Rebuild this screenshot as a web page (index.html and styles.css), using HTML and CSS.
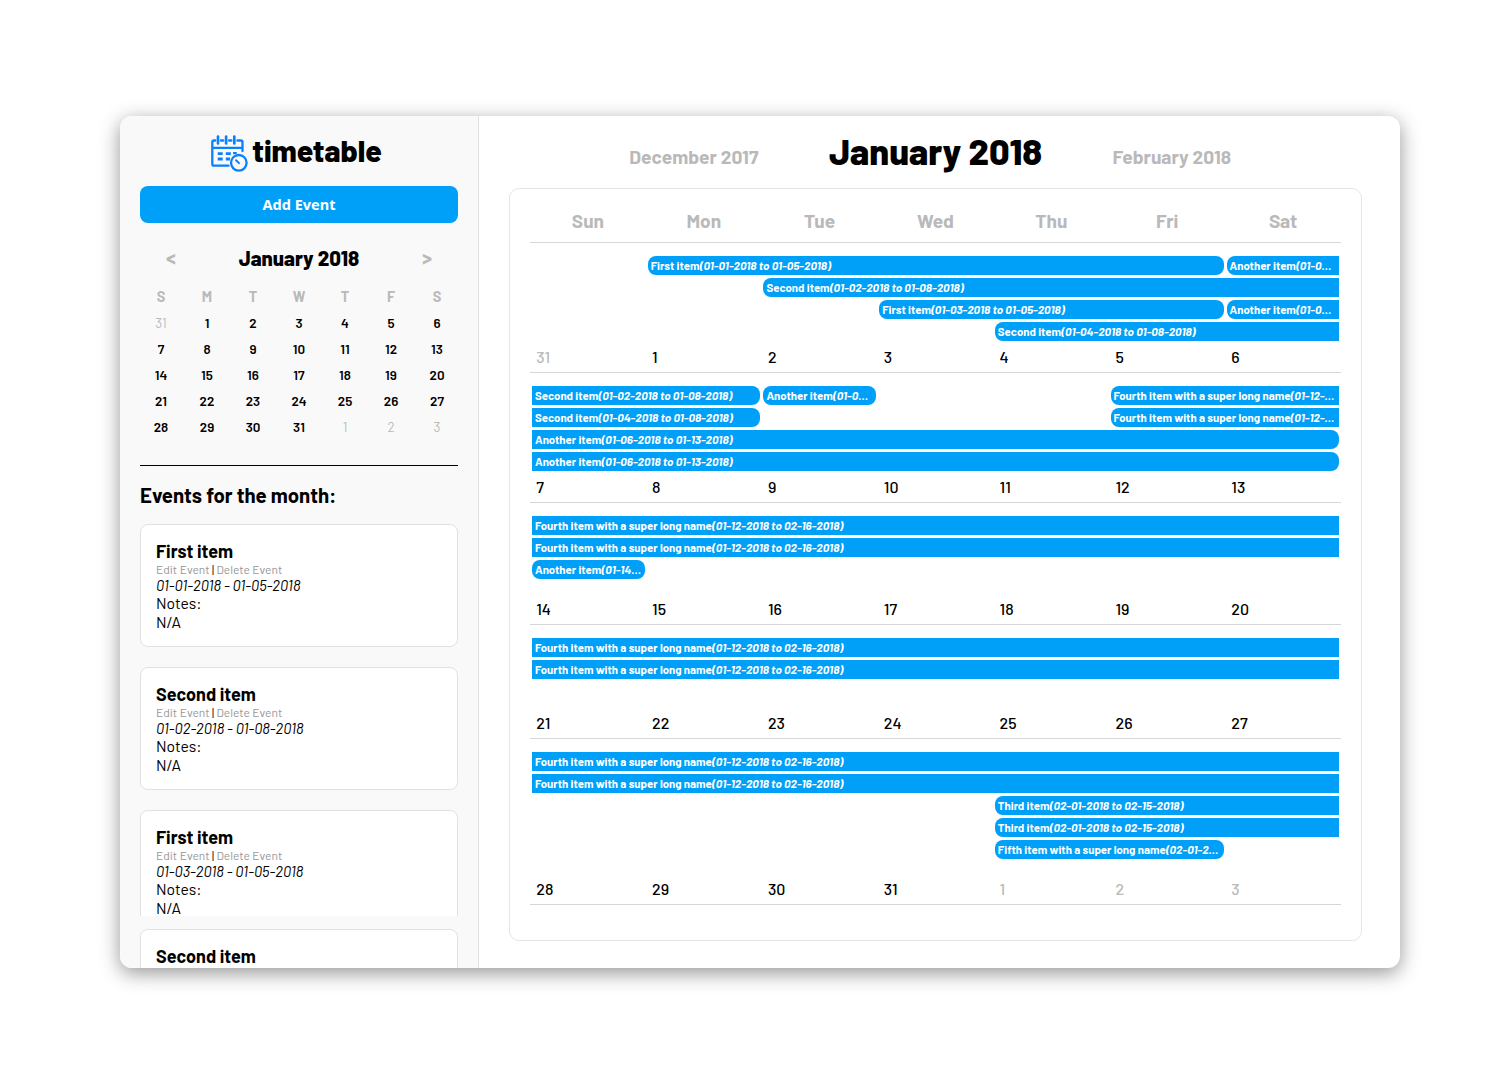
FILE: index.html
```html
<!DOCTYPE html>
<html lang="en">
<head>
<meta charset="utf-8">
<title>timetable</title>
<link rel="stylesheet" href="styles.css">
</head>
<body>
<div class="app">
  <aside class="sidebar">
    <div class="logo">
      <svg class="logo-icon" viewBox="0 0 37 37" fill="none" stroke="#0a80ff" stroke-width="2.3" stroke-linecap="round">
        <path d="M4.2 5.5H3Q1.3 5.5 1.3 7.2V29Q1.3 30.7 3 30.7H17.5M10 5.5h2.2M18 5.5h2.4M26.4 5.5h3.4Q31.5 5.5 31.5 7.2V16M1.4 12.8H31.4"/>
        <path d="M7 1.5v7M15.1 1.5v7M23.3 1.5v7" stroke-width="2.7"/>
        <path d="M6.7 18.6h5M14.8 18.6h5M6.7 24h5M14.8 24h4.2" stroke-width="2.8" stroke-linecap="butt"/>
        <path d="M22 18.2h3.8" stroke-width="2.2" stroke-linecap="butt"/>
        <circle cx="27.8" cy="27.8" r="7.8"/>
        <path d="M25 25.2l3 2.9" stroke-width="2"/>
      </svg>
      <span class="logo-text">timetable</span>
    </div>
    <button class="add-event">Add Event</button>

    <div class="mini-nav">
      <span class="arrow">&lt;</span>
      <span class="mini-title">January 2018</span>
      <span class="arrow">&gt;</span>
    </div>
    <div class="mini-grid">
      <b>S</b><b>M</b><b>T</b><b>W</b><b>T</b><b>F</b><b>S</b>
      <span class="other">31</span><span>1</span><span>2</span><span>3</span><span>4</span><span>5</span><span>6</span>
      <span>7</span><span>8</span><span>9</span><span>10</span><span>11</span><span>12</span><span>13</span>
      <span>14</span><span>15</span><span>16</span><span>17</span><span>18</span><span>19</span><span>20</span>
      <span>21</span><span>22</span><span>23</span><span>24</span><span>25</span><span>26</span><span>27</span>
      <span>28</span><span>29</span><span>30</span><span>31</span><span class="other">1</span><span class="other">2</span><span class="other">3</span>
    </div>

    <h2 class="events-title">Events for the month:</h2>
    <div class="event-list">
      <article class="event">
        <h3>First item</h3>
        <div class="links"><a>Edit Event</a> | <a>Delete Event</a></div>
        <div class="dates">01-01-2018 - 01-05-2018</div>
        <div>Notes:</div><div>N/A</div>
      </article>
      <article class="event">
        <h3>Second item</h3>
        <div class="links"><a>Edit Event</a> | <a>Delete Event</a></div>
        <div class="dates">01-02-2018 - 01-08-2018</div>
        <div>Notes:</div><div>N/A</div>
      </article>
      <article class="event">
        <h3>First item</h3>
        <div class="links"><a>Edit Event</a> | <a>Delete Event</a></div>
        <div class="dates">01-03-2018 - 01-05-2018</div>
        <div>Notes:</div><div>N/A</div>
      </article>
    </div>
    <div class="event-list next">
      <article class="event">
        <h3>Second item</h3>
      </article>
    </div>
  </aside>

  <main class="main">
    <header class="months">
      <span class="side prev">December 2017</span>
      <h1>January 2018</h1>
      <span class="side">February 2018</span>
    </header>
    <section class="calendar">
      <div class="weekdays"><span>Sun</span><span>Mon</span><span>Tue</span><span>Wed</span><span>Thu</span><span>Fri</span><span>Sat</span></div>

      <div class="week w1">
        <div class="bars">
          <div class="bar start end c2-7">First item<i>(01-01-2018 to 01-05-2018)</i></div>
          <div class="bar start c7-8">Another item<i>(01-06-2018 to 01-13-2018)</i></div>
          <div class="bar start c3-8">Second item<i>(01-02-2018 to 01-08-2018)</i></div>
          <div class="bar start end c4-7">First item<i>(01-03-2018 to 01-05-2018)</i></div>
          <div class="bar start c7-8">Another item<i>(01-06-2018 to 01-13-2018)</i></div>
          <div class="bar start c5-8">Second item<i>(01-04-2018 to 01-08-2018)</i></div>
        </div>
        <div class="days"><span class="other">31</span><span>1</span><span>2</span><span>3</span><span>4</span><span>5</span><span>6</span></div>
      </div>

      <div class="week w2">
        <div class="bars">
          <div class="bar end c1-3">Second item<i>(01-02-2018 to 01-08-2018)</i></div>
          <div class="bar start end c3-4">Another item<i>(01-09-2018 to 01-09-2018)</i></div>
          <div class="bar start c6-8">Fourth item with a super long name<i>(01-12-2018 to 02-16-2018)</i></div>
          <div class="bar end c1-3">Second item<i>(01-04-2018 to 01-08-2018)</i></div>
          <div class="bar start c6-8">Fourth item with a super long name<i>(01-12-2018 to 02-16-2018)</i></div>
          <div class="bar end c1-8">Another item<i>(01-06-2018 to 01-13-2018)</i></div>
          <div class="bar end c1-8">Another item<i>(01-06-2018 to 01-13-2018)</i></div>
        </div>
        <div class="days"><span>7</span><span>8</span><span>9</span><span>10</span><span>11</span><span>12</span><span>13</span></div>
      </div>

      <div class="week w3">
        <div class="bars">
          <div class="bar c1-8">Fourth item with a super long name<i>(01-12-2018 to 02-16-2018)</i></div>
          <div class="bar c1-8">Fourth item with a super long name<i>(01-12-2018 to 02-16-2018)</i></div>
          <div class="bar start end c1-2">Another item<i>(01-14-2018 to 01-14-2018)</i></div>
        </div>
        <div class="days"><span>14</span><span>15</span><span>16</span><span>17</span><span>18</span><span>19</span><span>20</span></div>
      </div>

      <div class="week w4">
        <div class="bars">
          <div class="bar c1-8">Fourth item with a super long name<i>(01-12-2018 to 02-16-2018)</i></div>
          <div class="bar c1-8">Fourth item with a super long name<i>(01-12-2018 to 02-16-2018)</i></div>
        </div>
        <div class="days"><span>21</span><span>22</span><span>23</span><span>24</span><span>25</span><span>26</span><span>27</span></div>
      </div>

      <div class="week w5">
        <div class="bars">
          <div class="bar c1-8">Fourth item with a super long name<i>(01-12-2018 to 02-16-2018)</i></div>
          <div class="bar c1-8">Fourth item with a super long name<i>(01-12-2018 to 02-16-2018)</i></div>
          <div class="bar start c5-8">Third item<i>(02-01-2018 to 02-15-2018)</i></div>
          <div class="bar start c5-8">Third item<i>(02-01-2018 to 02-15-2018)</i></div>
          <div class="bar start end c5-7">Fifth item with a super long name<i>(02-01-2018 to 02-02-2018)</i></div>
        </div>
        <div class="days"><span>28</span><span>29</span><span>30</span><span>31</span><span class="other">1</span><span class="other">2</span><span class="other">3</span></div>
      </div>
    </section>
  </main>
</div>
</body>
</html>
```
FILE: styles.css
```css
* { box-sizing: border-box; }
body {
  margin: 0;
  min-height: 100vh;
  padding: 116px 112px 0 120px;
  background: #fff;
  color: #000;
  font-family: Barlow, Roboto, sans-serif;
}
h1, h2, h3 { margin: 0; }

.app {
  display: flex;
  height: 852px;
  border-radius: 12px;
  overflow: hidden;
  background: #fff;
  box-shadow: 0 5px 20px rgba(0, 0, 0, .42);
}

/* Sidebar */
.sidebar {
  display: flex;
  flex-direction: column;
  width: 359px;
  flex: none;
  padding: 0 20px;
  border-right: 1px solid #e1e1e1;
  background: #f9f9f9;
}
.logo {
  display: flex;
  align-items: center;
  justify-content: center;
  flex: none;
  gap: 4px;
  height: 70px;
  padding: 5px 5px 0 0;
}
.logo-icon { width: 37px; height: 37px; }
.logo-text {
  margin-top: -8px;
  font-size: 30px;
  line-height: 36px;
  font-weight: 800;
}
.add-event {
  flex: none;
  height: 37px;
  border: 0;
  border-radius: 8px;
  padding: 0;
  background: #009ff8;
  color: #fff;
  font: 700 14.5px/37px "Noto Sans", sans-serif;
}
.mini-nav {
  display: flex;
  align-items: center;
  justify-content: space-between;
  flex: none;
  height: 36px;
  margin-top: 16px;
  padding: 0 26px;
}
.arrow { font-size: 20px; font-weight: 700; color: #b9b9b9; }
.mini-title { padding-top: 2px; font-size: 20.4px; font-weight: 800; }
.mini-grid {
  display: grid;
  grid-template-columns: repeat(7, 46px);
  grid-template-rows: repeat(6, 26px);
  flex: none;
  justify-content: center;
  width: 318px;
  height: 182px;
  margin: 9px 0 4px;
  text-align: center;
  font-size: 13.4px;
  line-height: 26px;
  font-weight: 600;
  border-bottom: 1px solid #000;
}
.mini-grid b { color: #b9b9b9; font-size: 14.4px; font-weight: 700; }
.other { color: #b9b9b9; }
.mini-grid .other { font-weight: 400; }
.events-title {
  flex: none;
  margin: 13px 0 17px;
  font-size: 20.4px;
  line-height: 24px;
}
.event-list {
  flex: none;
  display: flex;
  flex-direction: column;
  gap: 20px;
  height: 392px;
  overflow: hidden;
}
.event-list.next { height: 39px; margin-top: 13px; }
.event {
  flex: none;
  height: 123px;
  padding: 15px;
  border: 1px solid #e1e1e1;
  border-radius: 8px;
  background: #fff;
  font-size: 15.7px;
  line-height: 19px;
}
.event h3 { font-size: 18px; line-height: 23px; }
.links { font-size: 12px; line-height: 13px; }
.links a { color: #979797; }
.dates { margin-bottom: -1px; font-size: 14.9px; font-style: italic; line-height: 18px; }

/* Month view */
.main { flex: 1; padding: 0 38px 27px 30px; }
.months {
  display: grid;
  grid-template-columns: 1fr auto 1fr;
  align-items: start;
  gap: 70.5px;
  height: 72px;
  padding-top: 13px;
}
h1 { font-size: 36.1px; line-height: 44px; font-weight: 800; }
.side { margin-top: 17px; font-size: 19.2px; line-height: 22px; font-weight: 700; color: #b9b9b9; }
.prev { text-align: right; }
.calendar {
  height: 753px;
  padding: 12px 20px;
  border: 1px solid #e5e5e5;
  border-radius: 10px;
}
.weekdays {
  display: grid;
  grid-template-columns: repeat(7, 1fr);
  height: 42px;
  text-align: center;
  font-size: 19.1px;
  line-height: 40px;
  font-weight: 700;
  color: #b9b9b9;
  border-bottom: 1px solid #d6d6d6;
}
.week {
  display: flex;
  flex-direction: column;
  justify-content: space-between;
  padding-top: 13px;
  border-bottom: 1px solid #d6d6d6;
}
.w1, .w2 { height: 130px; }
.w3 { height: 122px; }
.w4 { height: 114px; }
.w5 { height: 166px; }
.bars {
  display: grid;
  grid-template-columns: repeat(7, 1fr);
  grid-auto-rows: 19px;
  row-gap: 3px;
  padding: 0 .5px;
}
.bar {
  min-width: 0;
  margin: 0 1.5px;
  padding: 0 2px 0 3px;
  background: #009ff8;
  color: #fff;
  font-size: 11.4px;
  line-height: 19px;
  font-weight: 700;
  white-space: nowrap;
  overflow: hidden;
  text-overflow: ellipsis;
}
.bar i { font-size: 11.75px; line-height: 1; }
.start { border-top-left-radius: 8px; border-bottom-left-radius: 8px; }
.end { border-top-right-radius: 8px; border-bottom-right-radius: 8px; }
.c1-2 { grid-column: 1 / 2; }
.c1-3 { grid-column: 1 / 3; }
.c1-8 { grid-column: 1 / 8; }
.c2-7 { grid-column: 2 / 7; margin-right: 1.1px; }
.c3-4 { grid-column: 3 / 4; padding-right: 4px; }
.c3-8 { grid-column: 3 / 8; }
.c4-7 { grid-column: 4 / 7; margin-right: 1.1px; }
.c5-7 { grid-column: 5 / 7; margin-right: 1.1px; }
.c5-8 { grid-column: 5 / 8; }
.c6-8 { grid-column: 6 / 8; }
.c7-8 { grid-column: 7 / 8; margin-left: 1.8px; padding-right: 4px; }
.days {
  display: grid;
  grid-template-columns: repeat(7, 1fr);
  height: 25px;
  font-size: 16px;
  line-height: 20px;
  font-weight: 500;
}
.days span { padding-left: 6.2px; }
```
